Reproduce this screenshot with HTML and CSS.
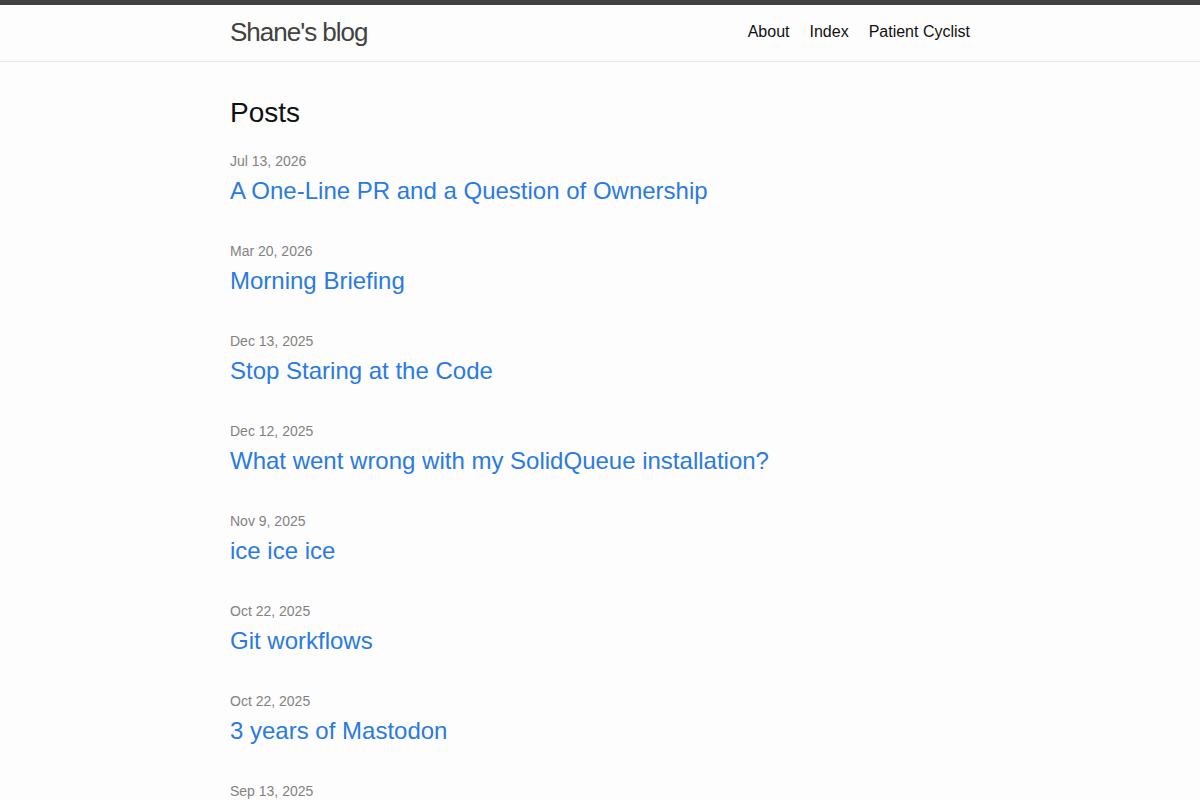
FILE: index.html
```html
<!DOCTYPE html>
<html lang="en">
<head>
<meta charset="utf-8">
<title>Shane's blog</title>
<link rel="stylesheet" href="styles.css">
</head>
<body>
<header class="site-header">
  <div class="wrapper header-inner">
    <a class="site-title" href="#">Shane's blog</a>
    <nav class="site-nav">
      <a class="page-link" href="#">About</a>
      <a class="page-link" href="#">Index</a>
      <a class="page-link" href="#">Patient Cyclist</a>
    </nav>
  </div>
</header>
<main class="page-content">
  <div class="wrapper">
    <h2 class="post-list-heading">Posts</h2>
    <ul class="post-list">
      <li><span class="post-meta">Jul 13, 2026</span><h3><a class="post-link" href="#">A One-Line PR and a Question of Ownership</a></h3></li>
      <li><span class="post-meta">Mar 20, 2026</span><h3><a class="post-link" href="#">Morning Briefing</a></h3></li>
      <li><span class="post-meta">Dec 13, 2025</span><h3><a class="post-link" href="#">Stop Staring at the Code</a></h3></li>
      <li><span class="post-meta">Dec 12, 2025</span><h3><a class="post-link" href="#">What went wrong with my SolidQueue installation?</a></h3></li>
      <li><span class="post-meta">Nov 9, 2025</span><h3><a class="post-link" href="#">ice ice ice</a></h3></li>
      <li><span class="post-meta">Oct 22, 2025</span><h3><a class="post-link" href="#">Git workflows</a></h3></li>
      <li><span class="post-meta">Oct 22, 2025</span><h3><a class="post-link" href="#">3 years of Mastodon</a></h3></li>
      <li><span class="post-meta">Sep 13, 2025</span><h3><a class="post-link" href="#">Summer notes</a></h3></li>
    </ul>
  </div>
</main>
</body>
</html>
```

FILE: styles.css
```css
html, body {
  margin: 0;
  padding: 0;
}
body {
  font: 400 16px/1.5 "Liberation Sans", Helvetica, Arial, sans-serif;
  color: #111111;
  background-color: #fdfdfd;
}
a {
  text-decoration: none;
}
.wrapper {
  max-width: 740px;
  margin: 0 auto;
  padding: 0 30px;
}
.site-header {
  border-top: 5px solid #424242;
  border-bottom: 1px solid #e8e8e8;
  min-height: 56px;
}
.header-inner {
  display: flex;
  justify-content: space-between;
  align-items: center;
  height: 54px;
}
.site-title {
  font-size: 26px;
  font-weight: 300;
  letter-spacing: -1px;
  line-height: 54px;
  color: #424242;
}
.site-nav {
  display: flex;
  gap: 20px;
  line-height: 54px;
}
.page-link {
  color: #111111;
  line-height: 1.5;
}
.page-content {
  padding: 30px 0;
}
.post-list-heading {
  font-size: 28px;
  font-weight: 400;
  line-height: 42px;
  margin: 0 0 16px;
}
.post-list {
  list-style: none;
  margin: 0;
  padding: 0;
}
.post-list li {
  margin-bottom: 31px;
}
.post-meta {
  display: block;
  font-size: 14px;
  line-height: 23px;
  color: #828282;
}
.post-list h3 {
  margin: 0;
  font-size: 24px;
  font-weight: 400;
  line-height: 36px;
}
.post-link {
  display: block;
  color: #2a7ae2;
}
```
